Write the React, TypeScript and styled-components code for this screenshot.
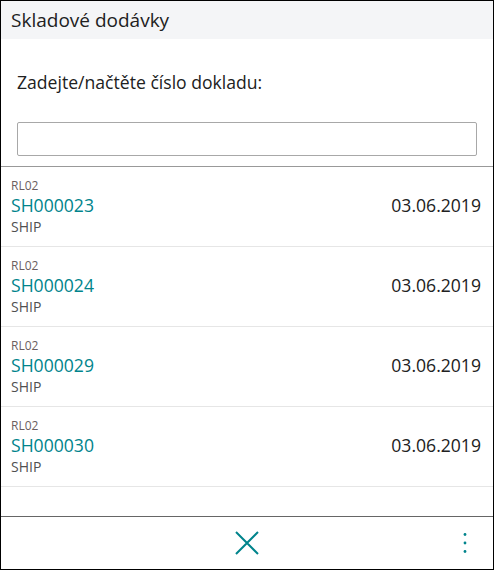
import styled, { createGlobalStyle } from "styled-components";

const GlobalStyle = createGlobalStyle`
    html, body {
        margin: 0;
        padding: 0;
        background: #fff;
    }
    * {
        box-sizing: border-box;
    }
`;

const Page = styled.div`
    width: 494px;
    height: 570px;
    border: 1px solid #000;
    display: flex;
    flex-direction: column;
    font-family: "Open Sans", "Noto Sans", sans-serif;
    color: #212121;
    background: #fff;
    overflow: hidden;
`;
const Header = styled.header`
    height: 38px;
    background: #f4f5f7;
    display: flex;
    align-items: center;
    padding: 0 10px;
`;
const Title = styled.h1`
    margin: 0;
    font-size: 19px;
    font-weight: 400;
    color: #212121;
`;
const Form = styled.div`
    padding: 31px 16px 10px;
    border-bottom: 1px solid #999;
    display: flex;
    flex-direction: column;
    gap: 28px;
`;
const Label = styled.label`
    font-size: 17.6px;
    line-height: 24px;
`;
const Input = styled.input`
    height: 34px;
    border: 1px solid #a8a8a8;
    border-radius: 2px;
    font-family: inherit;
    font-size: 16px;
    padding: 0 8px;
    outline: none;
`;
const List = styled.ul`
    list-style: none;
    margin: 0;
    padding: 0;
    flex: 1;
`;
const Row = styled.li`
    height: 80px;
    border-bottom: 1px solid #e6e6e6;
    display: flex;
    align-items: center;
    justify-content: space-between;
    padding: 0 12px 0 10px;
`;
const Info = styled.div`
    display: flex;
    flex-direction: column;
    margin-top: 2px;
`;
const Location = styled.span`
    font-size: 12px;
    line-height: 16px;
    color: #6b5e5e;
`;
const DocNo = styled.span`
    font-size: 17.6px;
    line-height: 22px;
    color: #00848c;
`;
const Kind = styled.span`
    font-size: 14px;
    line-height: 22px;
    color: #505050;
`;
const DateText = styled.span`
    font-size: 17.6px;
    color: #212121;
    margin-top: -3px;
`;
const Footer = styled.footer`
    height: 53px;
    border-top: 1px solid #666;
    display: grid;
    grid-template-columns: 1fr auto 1fr;
    align-items: center;
`;
const IconButton = styled.button`
    background: none;
    border: none;
    padding: 0;
    display: flex;
    justify-self: center;
    cursor: pointer;
    color: #00848c;
`;
const MenuButton = styled(IconButton)`
    justify-self: end;
    margin-right: 26px;
`;

const docs = [
    { no: "SH000023", date: "03.06.2019" },
    { no: "SH000024", date: "03.06.2019" },
    { no: "SH000029", date: "03.06.2019" },
    { no: "SH000030", date: "03.06.2019" },
];

function App() {
    return (
        <Page>
            <GlobalStyle />
            <Header>
                <Title>Skladové dodávky</Title>
            </Header>
            <Form>
                <Label htmlFor="doc">Zadejte/načtěte číslo dokladu:</Label>
                <Input id="doc" />
            </Form>
            <List>
                {docs.map((d) => (
                    <Row key={d.no}>
                        <Info>
                            <Location>RL02</Location>
                            <DocNo>{d.no}</DocNo>
                            <Kind>SHIP</Kind>
                        </Info>
                        <DateText>{d.date}</DateText>
                    </Row>
                ))}
            </List>
            <Footer>
                <span />
                <IconButton>
                    <svg width="24" height="24" viewBox="0 0 24 24">
                        <path d="M1 1 L23 23 M23 1 L1 23" stroke="currentColor" strokeWidth="2" fill="none" />
                    </svg>
                </IconButton>
                <MenuButton>
                    <svg width="4" height="22" viewBox="0 0 4 22">
                        <circle cx="2" cy="2.5" r="1.4" fill="currentColor" />
                        <circle cx="2" cy="11" r="1.4" fill="currentColor" />
                        <circle cx="2" cy="19.5" r="1.4" fill="currentColor" />
                    </svg>
                </MenuButton>
            </Footer>
        </Page>
    );
}
export default App;
